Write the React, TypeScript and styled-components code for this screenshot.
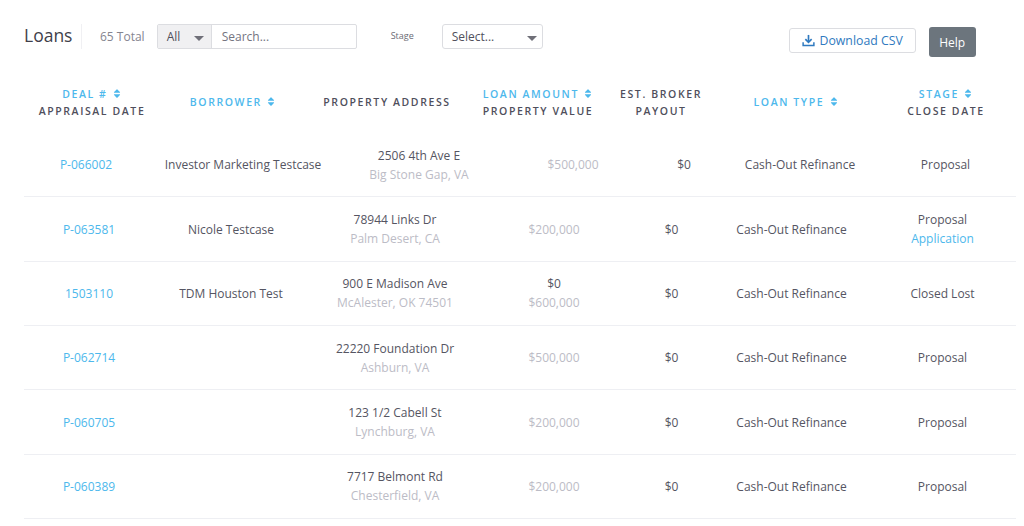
import React from 'react';
import styled, { createGlobalStyle } from 'styled-components';
import { FaSort } from 'react-icons/fa';

interface Loan {
  id: string;
  borrower: string;
  street: string;
  city: string;
  amount?: string;
  value: string;
  stage: string;
  closeDate?: string;
}

const loans: Loan[] = [
  { id: 'P-066002', borrower: 'Investor Marketing Testcase', street: '2506 4th Ave E', city: 'Big Stone Gap, VA', value: '$500,000', stage: 'Proposal' },
  { id: 'P-063581', borrower: 'Nicole Testcase', street: '78944 Links Dr', city: 'Palm Desert, CA', value: '$200,000', stage: 'Proposal', closeDate: 'Application' },
  { id: '1503110', borrower: 'TDM Houston Test', street: '900 E Madison Ave', city: 'McAlester, OK 74501', amount: '$0', value: '$600,000', stage: 'Closed Lost' },
  { id: 'P-062714', borrower: '', street: '22220 Foundation Dr', city: 'Ashburn, VA', value: '$500,000', stage: 'Proposal' },
  { id: 'P-060705', borrower: '', street: '123 1/2 Cabell St', city: 'Lynchburg, VA', value: '$200,000', stage: 'Proposal' },
  { id: 'P-060389', borrower: '', street: '7717 Belmont Rd', city: 'Chesterfield, VA', value: '$200,000', stage: 'Proposal' },
];

const FIRST_ROW_COLUMNS = '124px 190px 162px 146px 76px 156px 135px';
const ROW_COLUMNS = '130px 154px 174px 144px 91px 149px 153px';

const DownloadIcon = () => (
  <svg width="13" height="13" viewBox="0 0 14 14" fill="none">
    <path d="M7 1v7.5" stroke="#2f7ac0" strokeWidth="1.8" />
    <path d="M3.6 5.6 7 9l3.4-3.4" stroke="#2f7ac0" strokeWidth="1.8" />
    <path d="M1.2 9v3.4h11.6V9" stroke="#2f7ac0" strokeWidth="1.6" />
  </svg>
);

const App: React.FC = () => {
  return (
    <Page>
      <GlobalStyle />
      <Toolbar>
        <Title>Loans</Title>
        <Total>65 Total</Total>
        <SearchGroup>
          <ScopeSelect>
            All
            <Caret />
          </ScopeSelect>
          <SearchText>Search...</SearchText>
        </SearchGroup>
        <FilterLabel>Stage</FilterLabel>
        <StageSelect>
          Select...
          <Caret />
        </StageSelect>
        <DownloadButton>
          <DownloadIcon />
          Download CSV
        </DownloadButton>
        <HelpButton>Help</HelpButton>
      </Toolbar>

      <HeaderRow>
        <HeaderCell>
          <SortLabel>DEAL # <FaSort /></SortLabel>
          <span>APPRAISAL DATE</span>
        </HeaderCell>
        <HeaderCell>
          <SortLabel>BORROWER <FaSort /></SortLabel>
        </HeaderCell>
        <HeaderCell>
          <span>PROPERTY ADDRESS</span>
        </HeaderCell>
        <HeaderCell>
          <SortLabel>LOAN AMOUNT <FaSort /></SortLabel>
          <span>PROPERTY VALUE</span>
        </HeaderCell>
        <HeaderCell>
          <span>EST. BROKER</span>
          <span>PAYOUT</span>
        </HeaderCell>
        <HeaderCell>
          <SortLabel>LOAN TYPE <FaSort /></SortLabel>
        </HeaderCell>
        <HeaderCell>
          <SortLabel>STAGE <FaSort /></SortLabel>
          <span>CLOSE DATE</span>
        </HeaderCell>
      </HeaderRow>

      {loans.map((loan, i) => (
        <Row key={loan.id} $columns={i === 0 ? FIRST_ROW_COLUMNS : ROW_COLUMNS}>
          <Cell><LinkText>{loan.id}</LinkText></Cell>
          <Cell>{loan.borrower}</Cell>
          <Cell>
            {loan.street}
            <Muted>{loan.city}</Muted>
          </Cell>
          <Cell>
            {loan.amount}
            <Muted>{loan.value}</Muted>
          </Cell>
          <Cell>$0</Cell>
          <Cell>Cash-Out Refinance</Cell>
          <Cell>
            {loan.stage}
            {loan.closeDate && <LinkText>{loan.closeDate}</LinkText>}
          </Cell>
        </Row>
      ))}
    </Page>
  );
};

export default App;

const GlobalStyle = createGlobalStyle`
  html, body {
    margin: 0;
    padding: 0;
    background: #fff;
    overflow: hidden;
  }
  body {
    font-family: "Open Sans", "Liberation Sans", sans-serif;
    color: #555562;
  }
`;

const Page = styled.div`
  width: 1024px;
  height: 526px;
  box-sizing: border-box;
  padding: 0 8px 0 24px;
  overflow: hidden;
`;

const Toolbar = styled.div`
  display: flex;
  align-items: flex-start;
  height: 70px;
  padding-top: 24px;
  box-sizing: border-box;
`;

const Title = styled.h1`
  margin: 0;
  width: 57px;
  font-size: 17.5px;
  line-height: 22px;
  font-weight: 400;
  color: #3f3f4a;
`;

const Total = styled.span`
  margin-right: 12px;
  padding-left: 18px;
  border-left: 1px solid #f0f0f3;
  font-size: 12px;
  line-height: 25px;
  color: #85858f;
`;

const SearchGroup = styled.div`
  display: flex;
  width: 200px;
  height: 25px;
  box-sizing: border-box;
  border: 1px solid #dcdde1;
  border-radius: 2px;
`;

const ScopeSelect = styled.div`
  display: flex;
  align-items: center;
  justify-content: space-between;
  width: 54px;
  box-sizing: border-box;
  padding: 0 7px 0 9px;
  background: #f0f0f2;
  border-right: 1px solid #dcdde1;
  font-size: 12px;
  color: #50505c;
`;

const SearchText = styled.div`
  padding-left: 10px;
  font-size: 12px;
  line-height: 23px;
  color: #74747f;
`;

const Caret = styled.i`
  display: block;
  width: 0;
  height: 0;
  margin-top: 3px;
  border-left: 5px solid transparent;
  border-right: 5px solid transparent;
  border-top: 5px solid #6f6f78;
`;

const FilterLabel = styled.label`
  margin-left: 34px;
  width: 51px;
  font-size: 9px;
  line-height: 23px;
  color: #6a6a74;
`;

const StageSelect = styled.div`
  display: flex;
  align-items: center;
  justify-content: space-between;
  width: 101px;
  height: 25px;
  box-sizing: border-box;
  padding: 0 5px 0 9px;
  border: 1px solid #dcdde1;
  border-radius: 3px;
  font-size: 12px;
  color: #50505c;
`;

const DownloadButton = styled.button`
  display: flex;
  align-items: center;
  justify-content: center;
  gap: 5px;
  width: 127px;
  height: 25px;
  margin: 4px 0 0 246px;
  padding: 0;
  background: #fff;
  border: 1px solid #dcdde1;
  border-radius: 3px;
  font-family: inherit;
  font-size: 12.3px;
  color: #2f7ac0;
`;

const HelpButton = styled.button`
  width: 47px;
  height: 30px;
  margin: 3px 0 0 13px;
  padding: 0;
  background: #6c757d;
  border: none;
  border-radius: 3px;
  font-family: inherit;
  font-size: 12px;
  color: #fff;
`;

const HeaderRow = styled.div`
  display: grid;
  grid-template-columns: 124px 158px 150px 152px 94px 176px 124px;
  align-items: center;
  height: 63px;
  padding: 2px 0 0 6px;
  box-sizing: border-box;
`;

const HeaderCell = styled.div`
  display: flex;
  flex-direction: column;
  align-items: center;
  font-size: 10.5px;
  line-height: 17px;
  font-weight: 600;
  letter-spacing: 1.6px;
  white-space: nowrap;
  color: #4f4f5c;
`;

const SortLabel = styled.span`
  color: #4db8ec;

  svg {
    width: 10px;
    height: 11px;
    vertical-align: -1px;
  }
`;

const Row = styled.div<{ $columns: string }>`
  display: grid;
  grid-template-columns: ${(props) => props.$columns};
  align-items: center;
  height: 64.35px;
  box-sizing: border-box;
  border-bottom: 1px solid #eeeff3;
`;

const Cell = styled.div`
  display: flex;
  flex-direction: column;
  align-items: center;
  font-size: 12px;
  line-height: 19px;
  white-space: nowrap;
  color: #555562;
`;

const Muted = styled.span`
  color: #bcbcc6;
`;

const LinkText = styled.span`
  color: #4db8ec;
`;
